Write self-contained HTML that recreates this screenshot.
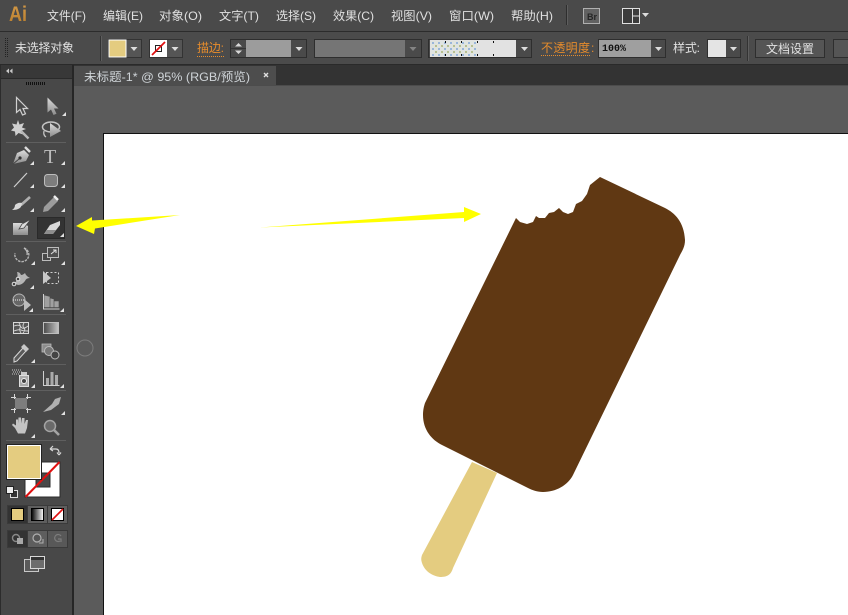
<!DOCTYPE html>
<html><head><meta charset="utf-8">
<style>
html,body{margin:0;padding:0;width:848px;height:615px;overflow:hidden;background:#5b5b5b}
svg{display:block}
text{font-family:"Liberation Sans","WenQuanYi Zen Hei","Noto Sans CJK SC",sans-serif;font-size:12px;fill:#e0e0e0}
</style></head><body>
<svg width="848" height="615" viewBox="0 0 848 615" xmlns="http://www.w3.org/2000/svg">
<defs>
<linearGradient id="g" x1="0" y1="0" x2="0" y2="1"><stop offset="0" stop-color="#dcdcdc"/><stop offset="1" stop-color="#8c8c8c"/></linearGradient>
<linearGradient id="h" x1="0" y1="0" x2="1" y2="0"><stop offset="0" stop-color="#4a4a4a"/><stop offset="1" stop-color="#c4c4c4"/></linearGradient>
<linearGradient id="bw" x1="0" y1="0" x2="1" y2="0"><stop offset="0" stop-color="#000"/><stop offset="1" stop-color="#fff"/></linearGradient>
<linearGradient id="ai" x1="0" y1="0" x2="0" y2="1"><stop offset="0" stop-color="#d49a48"/><stop offset="1" stop-color="#b87d2c"/></linearGradient>
<pattern id="dots" width="6" height="6" patternUnits="userSpaceOnUse"><rect width="6" height="6" fill="#e0e4e0"/><rect x="0" y="0" width="2" height="2" fill="#9ab6da"/><rect x="3" y="3" width="2" height="2" fill="#b8c090"/></pattern>
<path id="dd" d="M1 0h7l-3.500 4z" fill="#dcdcdc"/>
<path id="tri" d="M4 0v4h-4z" fill="#e2e2e2"/>
</defs>

<!-- backgrounds -->
<rect width="848" height="615" fill="#5b5b5b"/>
<rect width="848" height="31" fill="#4a4a4a"/>
<rect y="31" width="848" height="1" fill="#2c2c2c"/>
<rect y="32" width="848" height="32" fill="#4b4b4b"/>
<rect y="64" width="848" height="1" fill="#2a2a2a"/>
<rect x="74" y="65" width="774" height="20" fill="#333"/>
<rect x="74" y="85" width="774" height="1" fill="#4c4c4c"/>

<!-- canvas -->
<rect x="104" y="134" width="744" height="481" fill="#fff"/>
<path d="M103.500 615V133.500H848" fill="none" stroke="#111"/>
<circle cx="85" cy="348" r="8" fill="none" stroke="#7c7c7c" stroke-width="1"/>

<!-- tab -->
<rect x="74" y="66" width="202" height="19" fill="#4d4d4d"/>
<text x="84" y="81" textLength="166" lengthAdjust="spacingAndGlyphs" style="fill:#cfd4d8">未标题-1* @ 95% (RGB/预览)</text>
<path d="M264 73l4 4m0-4l-4 4" stroke="#e0e0e0" stroke-width="1.400"/>

<!-- menu -->
<text x="9" y="21" textLength="18" lengthAdjust="spacingAndGlyphs" style="font-size:21px;font-weight:bold;fill:url(#ai)">Ai</text>
<text x="47" y="20" textLength="39" lengthAdjust="spacingAndGlyphs">文件(F)</text>
<text x="103" y="20" textLength="40" lengthAdjust="spacingAndGlyphs">编辑(E)</text>
<text x="159" y="20" textLength="43" lengthAdjust="spacingAndGlyphs">对象(O)</text>
<text x="219" y="20" textLength="40" lengthAdjust="spacingAndGlyphs">文字(T)</text>
<text x="276" y="20" textLength="40" lengthAdjust="spacingAndGlyphs">选择(S)</text>
<text x="333" y="20" textLength="41" lengthAdjust="spacingAndGlyphs">效果(C)</text>
<text x="391" y="20" textLength="41" lengthAdjust="spacingAndGlyphs">视图(V)</text>
<text x="449" y="20" textLength="45" lengthAdjust="spacingAndGlyphs">窗口(W)</text>
<text x="511" y="20" textLength="42" lengthAdjust="spacingAndGlyphs">帮助(H)</text>
<rect x="566" y="5" width="1" height="20" fill="#2e2e2e"/>
<rect x="567" y="5" width="1" height="20" fill="#5e5e5e"/>
<rect x="583.500" y="8.500" width="16" height="15" fill="#626262" stroke="#b0b0b0"/>
<text x="587" y="20" style="font-size:9px;font-weight:bold;fill:#262626">Br</text>
<rect x="622.500" y="8.500" width="17" height="15" fill="#3c3c3c" stroke="#e0e0e0"/>
<path d="M632.500 9v14M633 16h6" stroke="#e0e0e0"/>
<use href="#dd" x="641" y="13"/>

<!-- control bar -->
<path d="M5.500 38v20M7.500 38v20" stroke="#222" stroke-dasharray="1 1"/>
<text x="15" y="52" textLength="59">未选择对象</text>
<rect x="100" y="36" width="1" height="25" fill="#333"/>
<rect x="101" y="36" width="1" height="25" fill="#5e5e5e"/>

<rect x="108.500" y="39.500" width="33" height="18" fill="#555" stroke="#333"/>
<rect x="109" y="40" width="17" height="17" fill="#e4cc80" stroke="#fff"/>
<use href="#dd" x="129.500" y="47"/>

<rect x="149.500" y="39.500" width="33" height="18" fill="#555" stroke="#333"/>
<rect x="150" y="40" width="17" height="17" fill="#fff"/>
<rect x="155.500" y="45.500" width="6" height="6" fill="none" stroke="#222"/>
<path d="M152 55l13-13" stroke="#e01010" stroke-width="1.800"/>
<use href="#dd" x="170.500" y="47"/>

<text x="197" y="52" textLength="27" style="fill:#e68c2c">描边:</text>
<path d="M197 56.500h27" stroke="#e68c2c" stroke-dasharray="1 1"/>

<rect x="230.500" y="39.500" width="76" height="18" fill="#4a4a4a" stroke="#2e2e2e"/>
<rect x="246" y="40" width="45" height="17" fill="#9c9c9c"/>
<path d="M235 46.500l3.500-3.500 3.500 3.500zM235 50.500l3.500 3.500 3.500-3.500z" fill="#d8d8d8"/>
<path d="M231 48.500h15" stroke="#333"/>
<use href="#dd" x="294.500" y="47"/>

<rect x="314.500" y="39.500" width="107" height="18" fill="#4a4a4a" stroke="#2e2e2e"/>
<rect x="315" y="40" width="90" height="17" fill="#757575"/>
<use href="#dd" x="408.500" y="47" opacity=".4"/>

<rect x="428.500" y="39.500" width="103" height="18" fill="#4a4a4a" stroke="#2e2e2e"/>
<rect x="430" y="40" width="86" height="17" fill="#e2e2e2"/>
<rect x="431" y="41" width="46" height="15" fill="url(#dots)"/>
<path d="M445.500 41v2M461.500 41v2M477.500 41v2M493.500 41v2M445.500 54v2M461.500 54v2M477.500 54v2M493.500 54v2" stroke="#111"/>
<use href="#dd" x="520" y="47"/>

<text x="541" y="52" textLength="49" style="fill:#e68c2c">不透明度</text>
<text x="591" y="52" style="fill:#e68c2c">:</text>
<path d="M541 55.500h50" stroke="#e68c2c" stroke-dasharray="1 1"/>

<rect x="598.500" y="39.500" width="67" height="18" fill="#4a4a4a" stroke="#2e2e2e"/>
<rect x="599" y="40" width="52" height="17" fill="#9f9f9f"/>
<text x="602" y="51" textLength="24" style="font-family:'Liberation Mono',monospace;font-size:10px;font-weight:bold;fill:#111">100%</text>
<use href="#dd" x="654" y="47"/>

<text x="673" y="52" textLength="27">样式:</text>

<rect x="707.500" y="39.500" width="33" height="18" fill="#4a4a4a" stroke="#2e2e2e"/>
<rect x="708" y="40" width="18" height="17" fill="#e4e4e4"/>
<use href="#dd" x="729" y="47"/>

<rect x="747" y="36" width="1" height="25" fill="#333"/>
<rect x="748" y="36" width="1" height="25" fill="#5e5e5e"/>
<rect x="755.500" y="39.500" width="69" height="18" fill="#555" stroke="#2e2e2e"/>
<text x="766" y="53" textLength="48">文档设置</text>
<rect x="833.500" y="39.500" width="20" height="18" fill="#555" stroke="#2e2e2e"/>

<!-- toolbox -->
<rect x="0" y="65" width="72" height="550" fill="#484848"/>
<rect x="0" y="65" width="72" height="13" fill="#383838"/>
<rect x="0" y="78" width="72" height="1" fill="#2a2a2a"/>
<rect x="0" y="65" width="1" height="550" fill="#2c2c2c"/>
<rect x="72" y="65" width="2" height="550" fill="#262626"/>
<path d="M9 68.500v5l-3-2.500zM12.500 68.500v5l-3-2.500z" fill="#c8c8c8"/>
<path d="M26 83.500h19" stroke="#111" stroke-width="3" stroke-dasharray="1 1"/>
<g fill="#5f5f5f">
<rect x="6" y="142" width="60" height="1"/><rect x="6" y="241" width="60" height="1"/><rect x="6" y="314" width="60" height="1"/><rect x="6" y="364" width="60" height="1"/><rect x="6" y="390" width="60" height="1"/><rect x="6" y="440" width="60" height="1"/>
</g>

<!-- selection -->
<path d="M16.500 97.500v15l3.500-3 2.500 5.500 3-1.200-2.500-5.300h4.500z" fill="#4a4a4a" stroke="#d0d0d0" stroke-width="1.200"/>
<path d="M47.500 97.500v15l3.500-3 2.500 5.500 3-1.200-2.500-5.300h4.500z" fill="url(#g)"/>
<use href="#tri" x="62" y="112"/>
<!-- magic wand -->
<path d="M18 120l1.500 4.500 4.500-1.500-2 4.500 4 1.500-4 1.500 1 4-4.500-1.500-3 3-.5-4.500-4-1 3-3-2-4 4.500 1z" fill="#cfcfcf"/>
<path d="M21 131l7.500 7.500" stroke="#b8b8b8" stroke-width="2.400"/>
<!-- lasso -->
<ellipse cx="51" cy="127" rx="8.500" ry="5" fill="none" stroke="#c4c4c4" stroke-width="1.500"/>
<path d="M50 123v14l11-6z" fill="url(#g)"/>
<path d="M44 131q-1 4 2 6" fill="none" stroke="#c4c4c4" stroke-width="1.300"/>
<!-- pen -->
<path d="M13 164l4-11 7-3 5 5-3 6z" fill="url(#g)"/>
<path d="M25 147l5 5" stroke="#dcdcdc" stroke-width="2.400"/>
<circle cx="20" cy="158" r="1.600" fill="#333"/><path d="M13 164l6-5" stroke="#444"/>
<use href="#tri" x="30" y="161"/>
<!-- type -->
<text x="44" y="163" style="font-family:'Liberation Serif',serif;font-size:20px;fill:#bcbcbc">T</text>
<use href="#tri" x="61" y="161"/>
<!-- line -->
<path d="M14 187l13-14" stroke="#cfcfcf" stroke-width="1.200"/>
<use href="#tri" x="30" y="184"/>
<!-- rounded rect -->
<rect x="44.500" y="174.500" width="13" height="12" rx="3" fill="#7d7d7d" stroke="#bdbdbd"/>
<use href="#tri" x="61" y="184"/>
<!-- brush -->
<path d="M30 197l-9 8" stroke="#b0b0b0" stroke-width="2.600"/>
<path d="M22 203q0 7-10 7q3-2 3-5q3-3 7-2z" fill="#d8d8d8"/>
<use href="#tri" x="30" y="208"/>
<!-- pencil -->
<path d="M54 197l4 4-10 10-5 1 1-5z" fill="#9c9c9c"/><path d="M54 196l4 4" stroke="#eee" stroke-width="2.400"/>
<use href="#tri" x="61" y="208"/>
<!-- blob -->
<path d="M13 223h10l5 3v9H13z" fill="url(#g)"/>
<path d="M31 219l-9 5-3 5 5-1z" fill="#dcdcdc" stroke="#484848" stroke-width=".8"/>
<!-- eraser selected -->
<rect x="37.500" y="217.500" width="27" height="21" fill="#333" stroke="#2a2a2a"/>
<path d="M44 234l6-9 10-4v4l-7 9z" fill="#d8d8d8"/>
<path d="M44 234l3-4h9l-3 4z" fill="#8e8e8e"/>
<use href="#tri" x="60" y="233"/>

<!-- rotate -->
<path d="M24 248a7 7 0 1 1-9 5" fill="none" stroke="#b4b4b4" stroke-width="1.400" stroke-dasharray="2.500 1"/>
<path d="M24 248q4 3 3 7" fill="none" stroke="#bcbcbc" stroke-width="1.300"/>
<use href="#tri" x="31" y="261"/>
<!-- scale -->
<rect x="42.500" y="253.500" width="8" height="7" fill="none" stroke="#bcbcbc"/>
<rect x="47.500" y="247.500" width="11" height="10" fill="#4f4f4f" stroke="#bcbcbc"/>
<path d="M51 254l5-4m-3 0h3v3" fill="none" stroke="#e0e0e0"/>
<use href="#tri" x="61" y="261"/>
<!-- warp -->
<path d="M13 283q3 0 4-4 1-4 0-7 3 0 4 3 2 0 4-2 1 3 5 5-4 0-5 3-3 4-7 4z" fill="#b4b4b4"/>
<circle cx="18" cy="279" r="1.800" fill="#444" stroke="#e0e0e0"/>
<circle cx="14" cy="284" r="1.800" fill="#444" stroke="#e0e0e0"/>
<use href="#tri" x="30" y="285"/>
<!-- free transform -->
<rect x="46.500" y="272.500" width="12" height="11" fill="none" stroke="#d0d0d0" stroke-dasharray="2 2"/>
<path d="M43 271v13l8-6z" fill="#c8c8c8"/>
<!-- shape builder -->
<circle cx="19" cy="300" r="6" fill="#666" stroke="#b4b4b4"/>
<path d="M13 300h12" stroke="#eee" stroke-dasharray="1 1"/>
<path d="M24 299v12l7-6z" fill="#bcbcbc"/>
<use href="#tri" x="29" y="308"/>
<!-- perspective -->
<path d="M44 295l6 1.500v11h-6zM50 298l4 1v8.500h-4zM54 301h5v6.500h-5z" fill="#a0a0a0" stroke="#484848" stroke-width=".6"/>
<path d="M43.500 294v15h16" fill="none" stroke="#d0d0d0"/>
<use href="#tri" x="60" y="308"/>

<!-- mesh -->
<rect x="13.500" y="322.500" width="15" height="11" fill="#555" stroke="#d8d8d8"/>
<path d="M14 326q5-2 7 1t7-1M14 331q5-2 7-1t7 1M19 323q2 3 1 5t1 5M24 323q-2 3 0 5t-1 5" fill="none" stroke="#d8d8d8" stroke-width=".9"/>
<!-- gradient -->
<rect x="43.500" y="322.500" width="15" height="11" fill="url(#h)" stroke="#bdbdbd"/>
<!-- eyedropper -->
<path d="M14 358l9-10 3 3-9 10-3 1z" fill="#5a5a5a" stroke="#d8d8d8"/>
<path d="M24 344l5 5-3 3-5-5z" fill="#c8c8c8"/>
<use href="#tri" x="31" y="359"/>
<!-- blend -->
<rect x="42" y="344" width="9" height="8" fill="#8c8c8c" stroke="#bbb" stroke-width=".8"/>
<circle cx="49" cy="351" r="4.500" fill="#777" stroke="#bbb"/>
<circle cx="55" cy="355" r="4" fill="#444" stroke="#bbb"/>
<!-- sprayer -->
<path d="M12 370h9M13 372h9M12 374h7" stroke="#c8c8c8" stroke-dasharray="1 1" fill="none"/>
<rect x="21" y="372" width="6" height="3" fill="#c8c8c8"/>
<rect x="19.500" y="375.500" width="9" height="11" fill="#aaa" stroke="#ddd"/>
<circle cx="24" cy="381" r="2.500" fill="#444" stroke="#eee"/>
<use href="#tri" x="31" y="384"/>
<!-- graph -->
<path d="M43.500 371v14.500h16" fill="none" stroke="#d0d0d0"/>
<rect x="46" y="378" width="3" height="7" fill="#aaa"/><rect x="50.500" y="372" width="3" height="13" fill="#aaa"/><rect x="55" y="375" width="3" height="10" fill="#aaa"/>
<use href="#tri" x="60" y="384"/>
<!-- artboard -->
<rect x="15" y="398" width="12" height="11" fill="#7d7d7d"/>
<path d="M11 397.500h5M26 397.500h5M11 409.500h5M26 409.500h5M14.500 394v5M27.500 394v5M14.500 408v5M27.500 408v5" stroke="#d8d8d8" fill="none"/>
<!-- slice -->
<path d="M43 412l9-8 3-5 6-2-2 7-8 6z" fill="#b0b0b0"/>
<use href="#tri" x="61" y="411"/>
<!-- hand -->
<path d="M15 428l-3-3 1-1.500 3 2v-6l2 0v4l.5-6h2.500v6l1-5.500h2.500v6l1.500-4h2l-1 8-2 5.500h-7z" fill="#c4c4c4"/>
<use href="#tri" x="31" y="434"/>
<!-- zoom -->
<circle cx="50" cy="426" r="5.500" fill="#6a6a6a" stroke="#a4a4a4" stroke-width="1.500"/>
<path d="M54 430l5 5" stroke="#a4a4a4" stroke-width="2.600"/>

<!-- colours -->
<path d="M50 449h6q3 0 3 4M50 449l3-3m-3 3l3 2M59 455l-2-2.500M59 455l2-2.500" fill="none" stroke="#d8d8d8" stroke-width="1.200"/>
<rect x="25" y="462" width="35" height="35" fill="#fff" stroke="#2c2c2c"/>
<rect x="36" y="473" width="14" height="14" fill="#484848" stroke="#2c2c2c"/>
<path d="M25.500 497l34-35" stroke="#e01010" stroke-width="2"/>
<rect x="6.500" y="444.500" width="35" height="35" fill="#e4cc80" stroke="#222"/>
<rect x="7.500" y="445.500" width="33" height="33" fill="none" stroke="#fff"/>
<rect x="10.500" y="490.500" width="7" height="7" fill="#333" stroke="#ddd"/>
<rect x="6.500" y="486.500" width="7" height="7" fill="#eee" stroke="#222"/>

<!-- colour modes -->
<rect x="7" y="505" width="61" height="19" fill="#3a3a3a"/>
<rect x="8" y="506" width="19" height="17" fill="#333"/>
<rect x="28" y="506" width="19" height="17" fill="#5e5e5e"/>
<rect x="48" y="506" width="19" height="17" fill="#5e5e5e"/>
<rect x="11.500" y="508.500" width="12" height="12" fill="#e4cc80" stroke="#000"/>
<rect x="31.500" y="508.500" width="12" height="12" fill="url(#bw)" stroke="#000"/>
<rect x="51.500" y="508.500" width="12" height="12" fill="#fff" stroke="#000"/>
<path d="M52 520l11-11" stroke="#e01010" stroke-width="1.600"/>

<!-- draw modes -->
<rect x="7" y="530" width="61" height="18" fill="#3a3a3a"/>
<rect x="8" y="531" width="19" height="16" fill="#333"/>
<rect x="28" y="531" width="19" height="16" fill="#5e5e5e"/>
<rect x="48" y="531" width="19" height="16" fill="#585858"/>
<circle cx="16" cy="538" r="3.500" fill="none" stroke="#888" stroke-width="1.400"/>
<rect x="17" y="538" width="6" height="6" fill="#a8a8a8"/>
<circle cx="37" cy="538" r="4" fill="#555" stroke="#b0b0b0" stroke-width="1.200"/>
<path d="M43 539v4h-4" fill="none" stroke="#b0b0b0"/>
<path d="M61 536a3.500 3.500 0 1 0-1 5M58 539h3v3" fill="none" stroke="#7c7c7c" stroke-width="1.200"/>

<!-- screen mode -->
<rect x="24.500" y="559.500" width="14" height="12" fill="#5a5a5a" stroke="#c8c8c8"/>
<rect x="30.500" y="556.500" width="14" height="12" fill="#6d6d6d" stroke="#d8d8d8"/>
<rect x="31" y="557" width="13" height="3" fill="#333"/>

<!-- popsicle -->
<path d="M472 462L497 473L453 568C451 575 447 577 440 577C433 576 425 572 422 563C421 560 421 558 422 555Z" fill="#e4cc80"/>
<path d="M600 177L665 208C675 213 684 222 685 240C685 247 682 251 680 255L573 475C568 485 556 492 543 492C537 492 532 490 528 488L442 445C432 440 423 430 423 415C423 410 424 406 425 403L516 218L520 222L527 224L533 222L536 216L539 218L545 218L549 213L554 212L559 208L563 212L568 214L573 212L576 204L582 201L587 194L590 185Z" fill="#603813"/>

<!-- arrows -->
<path d="M76 226L92 217V220.500L180 215L95 228.500L94 234Z" fill="#ffff00"/>
<path d="M260 227.500L464 212V207L481 214L464 222V218Z" fill="#ffff00"/>
</svg>
</body></html>
